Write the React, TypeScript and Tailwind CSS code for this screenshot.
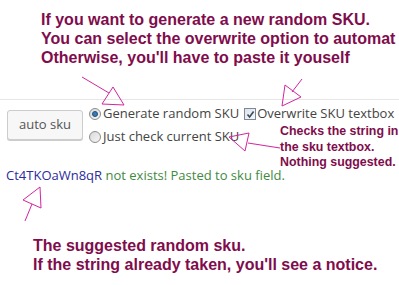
import React from 'react';

const note = { fontFamily: '"Liberation Sans", Arial, sans-serif' };
const ui = { fontFamily: '"Open Sans", "Noto Sans", sans-serif' };

function Radio({ checked }: { checked?: boolean }) {
  return (
    <span className="flex h-[12px] w-[12px] shrink-0 items-center justify-center rounded-full border border-[#8d8d8d] bg-gradient-to-br from-[#d9d9d9] to-[#f6f6f6]">
      {checked && (
        <span className="h-[6px] w-[6px] rounded-full border border-[#1d4f7c] bg-[#3c7ab0]" />
      )}
    </span>
  );
}

function Checkbox() {
  return (
    <span className="flex h-[12px] w-[12px] shrink-0 items-center justify-center border border-[#7b8a9b] bg-gradient-to-br from-[#dde3ea] to-[#f7f8fa]">
      <svg width="9" height="9" viewBox="0 0 9 9">
        <path d="M1.5 4.5 L3.6 7 L7.6 1.5" fill="none" stroke="#3b4a5a" strokeWidth="1.6" />
      </svg>
    </span>
  );
}

function Arrows() {
  const s = { fill: 'none', stroke: '#d3259e', strokeWidth: 1 };
  return (
    <svg className="pointer-events-none absolute inset-0" width="399" height="285">
      <line x1="82" y1="77" x2="109" y2="93" {...s} />
      <polygon points="113,87 102,104 124,105" {...s} />
      <line x1="302" y1="79" x2="292" y2="92" {...s} />
      <polygon points="285,85 301,97 282,106" {...s} />
      <polygon points="229,137 249,133 245,151" {...s} />
      <line x1="248" y1="143" x2="280" y2="148" {...s} />
      <polygon points="23,200 40,187 41,208" {...s} />
      <line x1="32" y1="204" x2="25" y2="221" {...s} />
    </svg>
  );
}

export default function App() {
  return (
    <div className="relative h-[285px] w-[399px] overflow-hidden bg-white">
      <div
        style={note}
        className="whitespace-nowrap pl-[41px] pt-[10px] text-[16px] font-bold leading-[19px] text-[#7f0c4c]"
      >
        <div>If you want to generate a new random SKU.</div>
        <div>You can select the overwrite option to automat</div>
        <div>Otherwise, you'll have to paste it youself</div>
      </div>

      <div className="mt-[32px] border-t border-[#e6e6e6]">
        <div style={ui} className="flex items-start pt-[4px] text-[13px] text-[#444]">
          <button className="ml-[7px] mt-[6px] h-[30px] w-[76px] rounded-[3px] border border-[#cccccc] bg-[#f7f7f7] text-[13px] text-[#555] shadow-[0_1px_0_#cccccc]">
            auto sku
          </button>
          <div className="ml-[6px] flex flex-col gap-[3px]">
            <label className="flex h-[20px] items-center whitespace-nowrap">
              <Radio checked />
              <span className="ml-[2px]">Generate random SKU</span>
              <span className="ml-[5px] flex items-center">
                <Checkbox />
              </span>
              <span className="ml-[1px]">Overwrite SKU textbox</span>
            </label>
            <label className="flex h-[20px] items-center whitespace-nowrap">
              <Radio />
              <span className="ml-[2px]">Just check current SKU</span>
            </label>
          </div>
        </div>
      </div>

      <div style={ui} className="mt-[19px] h-[18px] whitespace-nowrap pl-[6px] text-[13px] leading-[18px]">
        <span className="text-[#2b2b9c]">Ct4TKOaWn8qR</span>{' '}
        <span className="text-[#3f8a3f]">not exists! Pasted to sku field.</span>
      </div>

      <div
        style={note}
        className="mt-[53px] whitespace-nowrap pl-[33px] text-[16px] font-bold leading-[18.5px] text-[#7f0c4c]"
      >
        <div>The suggested random sku.</div>
        <div>If the string already taken, you'll see a notice.</div>
      </div>

      <div
        style={note}
        className="absolute left-[280px] top-[124px] whitespace-nowrap text-[12.4px] font-bold leading-[15.5px] text-[#7f0c4c]"
      >
        <div>Checks the string in</div>
        <div>the sku textbox.</div>
        <div>Nothing suggested.</div>
      </div>

      <Arrows />
    </div>
  );
}
